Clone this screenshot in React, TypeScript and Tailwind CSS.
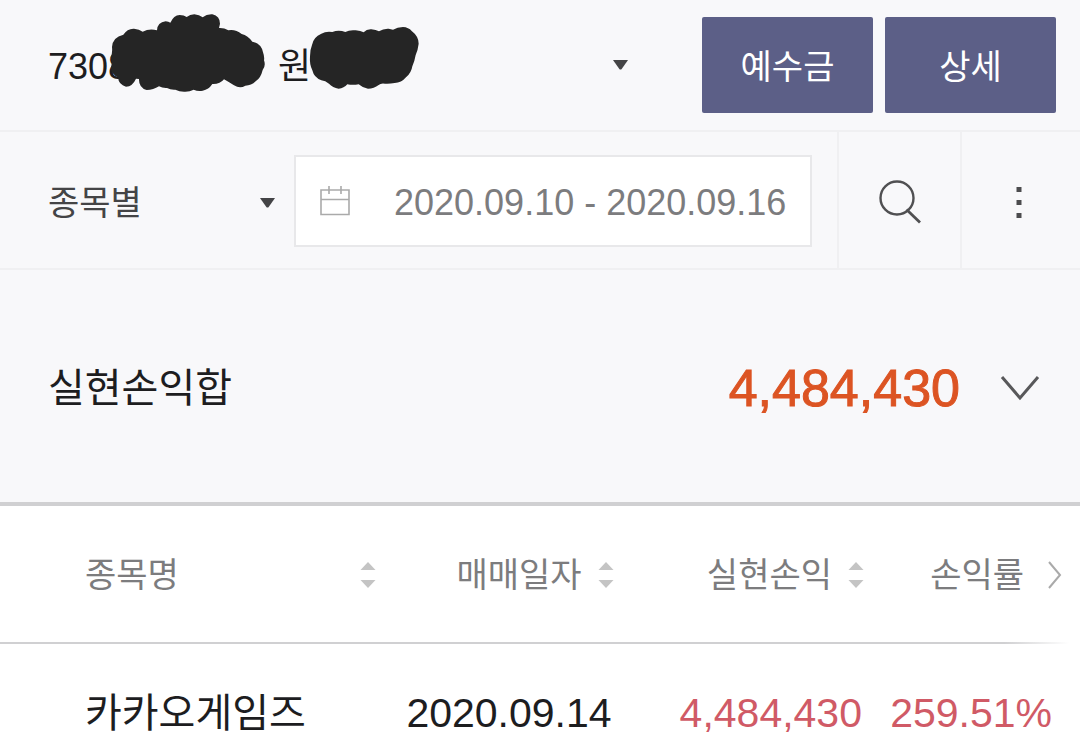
import React, { useState } from 'react';

function Caret({ className }: { className: string }) {
  return (
    <svg
      viewBox="0 0 15 10"
      className={`pointer-events-none absolute h-[10px] w-[15px] ${className}`}
      fill="#444446"
      aria-hidden="true"
    >
      <path d="M0 0h15L8.5 9.2Q7.5 10 6.5 9.2Z" />
    </svg>
  );
}

function SortIcon() {
  return (
    <svg viewBox="0 0 16 28" className="h-7 w-4 shrink-0" fill="#c4c4c4" aria-hidden="true">
      <path d="M8 1L15.5 9H0.5Z" />
      <path d="M0.5 19H15.5L8 27Z" />
    </svg>
  );
}

// Marker strokes covering the private part of the account
function Redaction() {
  return (
    <svg
      viewBox="240 40 930 240"
      className="pointer-events-none absolute left-[110px] top-[13px] h-20 w-[310px]"
      fill="#252525"
      aria-hidden="true"
    >
      <path d="M242 172Q248 160 246 142Q248 112 280 105Q292 86 312 87Q328 88 338 96Q358 86 381 92Q382 68 407 65Q416 66 421 69Q431 47 449 46Q462 46 470 52Q480 44 493 44Q508 45 518 53Q530 43 547 44Q570 50 570 72L567 85Q582 84 595 92Q616 88 635 103Q654 108 667 126Q694 132 699 158Q704 172 702 182Q708 198 698 211Q692 236 677 245Q664 258 646 258Q630 268 612 257Q598 248 582 239Q570 254 547 253Q536 270 518 273Q504 276 491 270Q478 277 462 276Q448 276 436 270Q422 271 411 265Q398 266 387 260Q370 271 350 271Q326 264 327 238L318 237Q308 260 288 261Q266 256 264 233Q244 224 242 205Q248 190 242 172Z" />
      <path d="M840 170Q840 150 846 136Q850 112 874 102Q888 94 907 97Q926 90 946 97Q958 90 977 92Q992 94 1001 98Q1010 88 1024 89Q1038 90 1047 95Q1060 86 1076 87L1089 90Q1102 82 1119 82Q1136 83 1145 94Q1166 110 1166 132Q1164 150 1157 166Q1154 184 1147 200Q1144 220 1128 233Q1114 250 1094 250Q1078 253 1065 252Q1052 250 1046 256Q1032 267 1014 267Q998 265 986 254Q968 257 952 254Q942 266 926 267Q908 264 897 252Q886 243 874 242Q852 234 847 212Q838 194 840 170Z" />
    </svg>
  );
}

const rows = [
  { name: '카카오게임즈', date: '2020.09.14', profit: '4,484,430', rate: '259.51%' },
];

export default function App() {
  const [group, setGroup] = useState('종목별');
  const [period, setPeriod] = useState('2020.09.10 - 2020.09.16');

  return (
    <div className="min-h-screen w-full overflow-hidden bg-white font-['Liberation_Sans','Noto_Sans_CJK_KR',sans-serif] text-[#1d1d1f]">
      {/* Account */}
      <div className="flex items-center border-b-2 border-[#f0f0f2] bg-[#f8f8fa] pb-[17px] pr-6 pt-[17px]">
        <div className="relative min-w-0 flex-1">
          <select
            aria-label="계좌"
            className="h-24 w-full appearance-none bg-transparent pl-12 pt-1 text-[36px] leading-[52px] focus:outline-none"
          >
            <option>{'7308\u2003\u2003\u2003\u2003\u2006원'}</option>
          </select>
          <Caret className="right-[74px] top-[43px]" />
        </div>
        <div className="flex gap-3">
          <button type="button" className="h-24 w-[171px] rounded-[2px] bg-[#5c5f87] pt-1 text-[34px] leading-[48px] text-white">
            예수금
          </button>
          <button type="button" className="h-24 w-[171px] rounded-[2px] bg-[#5c5f87] pt-1 text-[34px] leading-[48px] text-white">
            상세
          </button>
        </div>
        <Redaction />
      </div>

      {/* Filters */}
      <div className="flex h-[138px] items-stretch border-b-2 border-[#f0f0f2] bg-[#f8f8fa]">
        <div className="relative w-[294px] shrink-0">
          <select
            aria-label="조회 구분"
            value={group}
            onChange={(e) => setGroup(e.target.value)}
            className="h-full w-full appearance-none bg-transparent pl-12 pt-1.5 text-[34px] leading-[48px] text-[#444446] focus:outline-none"
          >
            <option>종목별</option>
            <option>일자별</option>
          </select>
          <Caret className="right-[19px] top-[66px]" />
        </div>
        <label className="mb-[21px] mr-[25px] mt-[23px] flex min-w-0 flex-1 items-center border-2 border-[#e8e8ea] bg-white pl-6">
          <svg viewBox="0 0 30 30" className="h-[30px] w-[30px] shrink-0" fill="none" stroke="#aaaaaa" strokeWidth="1.6" aria-hidden="true">
            <path d="M1 4H29V28.5H1Z M1 13.5H29 M9 0V8 M21 0V8" />
          </svg>
          <input
            type="text"
            aria-label="조회 기간"
            value={period}
            onChange={(e) => setPeriod(e.target.value)}
            className="ml-11 w-full min-w-0 bg-transparent pt-1 text-[36px] leading-[48px] text-[#7c7c7e] focus:outline-none"
          />
        </label>
        <button type="button" aria-label="조회" className="flex w-[123px] shrink-0 items-center justify-center border-l-2 border-[#f0f0f2] pt-1">
          <svg viewBox="0 0 44 46" className="h-[46px] w-11" fill="none" stroke="#505052" strokeWidth="2.4" aria-hidden="true">
            <circle cx="19" cy="19" r="16.5" />
            <path d="M28.5 30.5L42 43.5" strokeWidth="2.8" />
          </svg>
        </button>
        <button type="button" aria-label="더보기" className="flex w-[120px] shrink-0 items-center justify-center border-l-2 border-[#f0f0f2] pr-1 pt-1.5">
          <svg viewBox="0 0 6 34" className="h-[34px] w-[6px]" fill="#4c4c4e" aria-hidden="true">
            <path d="M0.5 1h5v5h-5Z M0.5 14h5v5h-5Z M0.5 27h5v5h-5Z" />
          </svg>
        </button>
      </div>

      {/* Realized total */}
      <div className="flex h-[236px] items-center border-b-4 border-[#d0d0d2] bg-[#f8f8fa] pl-12 pr-10 pt-1">
        <h2 className="text-[40px] leading-[56px]">실현손익합</h2>
        <strong className="ml-auto text-[52px] font-normal leading-[56px] text-[#dc5423] [-webkit-text-stroke:1px_#dc5423]">
          4,484,430
        </strong>
        <button type="button" aria-label="펼치기" className="ml-10">
          <svg viewBox="0 0 40 26" className="h-[26px] w-10" fill="none" stroke="#58585a" strokeWidth="3" aria-hidden="true">
            <path d="M2 2L20 23L38 2" />
          </svg>
        </button>
      </div>

      {/* Trades */}
      <table className="w-full table-fixed border-collapse">
        <colgroup>
          <col className="w-[35%]" />
          <col className="w-[22%]" />
          <col className="w-[23%]" />
          <col className="w-[20%]" />
        </colgroup>
        <thead className="bg-[linear-gradient(to_right,#d0d0d2_93%,transparent_99%)] bg-[length:100%_2px] bg-bottom bg-no-repeat text-[34px] leading-[48px] text-[#7c7c7e]">
          <tr className="h-[138px]">
            <th scope="col" className="p-0 pl-[85px] pr-0.5 font-normal">
              <button type="button" className="flex w-full items-center justify-between">
                종목명
                <SortIcon />
              </button>
            </th>
            <th scope="col" className="p-0 pr-0.5 font-normal">
              <button type="button" className="flex w-full items-center justify-end gap-4">
                매매일자
                <SortIcon />
              </button>
            </th>
            <th scope="col" className="p-0 font-normal">
              <button type="button" className="flex w-full items-center justify-end gap-4">
                실현손익
                <SortIcon />
              </button>
            </th>
            <th scope="col" className="p-0 pr-[18px] font-normal">
              <button type="button" className="flex w-full items-center justify-end gap-5">
                손익률
                <svg viewBox="0 0 18 28" className="h-7 w-[18px] shrink-0" fill="none" stroke="#aaaaaa" strokeWidth="2" aria-hidden="true">
                  <path d="M5 1L16 14L5 27" />
                </svg>
              </button>
            </th>
          </tr>
        </thead>
        <tbody className="text-[41px] leading-[56px]">
          {rows.map((row) => (
            <tr key={row.name} className="h-[138px] whitespace-nowrap">
              <td className="p-0 pl-[85px] text-[40px]">{row.name}</td>
              <td className="p-0 pr-1 text-right">{row.date}</td>
              <td className="p-0 pr-0.5 text-right text-[#d05a66]">{row.profit}</td>
              <td className="p-0 pr-7 text-right text-[#d05a66]">{row.rate}</td>
            </tr>
          ))}
        </tbody>
      </table>
    </div>
  );
}
